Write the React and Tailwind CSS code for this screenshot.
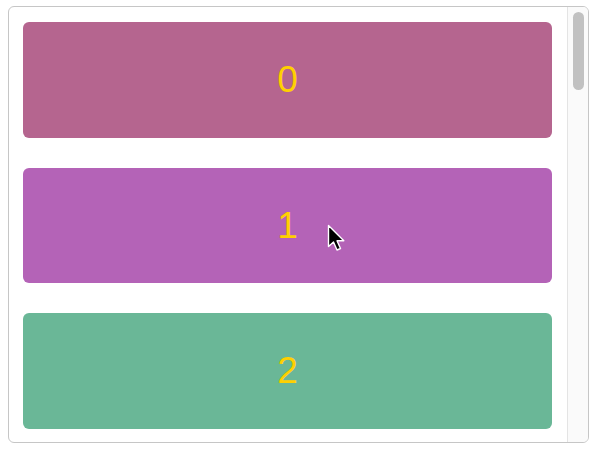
export default function App() {
  const cards = [
    { n: "0", c: "bg-[#b5658f]" },
    { n: "1", c: "bg-[#b463b7]" },
    { n: "2", c: "bg-[#6ab797]" },
  ];
  return (
    <div className="w-[600px] h-[454px] bg-white relative" style={{ fontFamily: '"Liberation Sans", Arial, sans-serif' }}>
      <div className="absolute left-[8px] top-[6px] w-[581px] h-[437px] border border-[#c6c6c6] rounded-[6px] flex overflow-hidden">
        <div className="flex-1 flex flex-col gap-[30px] pt-[15px] pl-[14px] pr-[15px] overflow-hidden">
          {cards.map((k) => (
            <div key={k.n} className={`${k.c} h-[115.5px] shrink-0 rounded-[6px] flex items-center justify-center text-[#ffd000] text-[37px]`}>
              {k.n}
            </div>
          ))}
        </div>
        <div className="w-[21px] border-l border-[#e4e4e4] bg-[#fafafa] pt-[5px] flex justify-center">
          <div className="w-[11px] h-[78px] rounded-full bg-[#c1c1c1]" />
        </div>
      </div>
      <svg className="absolute left-[327px] top-[224px]" width="20" height="29" viewBox="0 0 20 29">
        <path d="M1.5 1.5 L1.5 22.5 L6.5 18 L10 26 L13.5 24.5 L10 16.8 L16.8 16.8 Z" fill="#000" stroke="#fff" strokeWidth="1.4" strokeLinejoin="round" />
      </svg>
    </div>
  );
}
